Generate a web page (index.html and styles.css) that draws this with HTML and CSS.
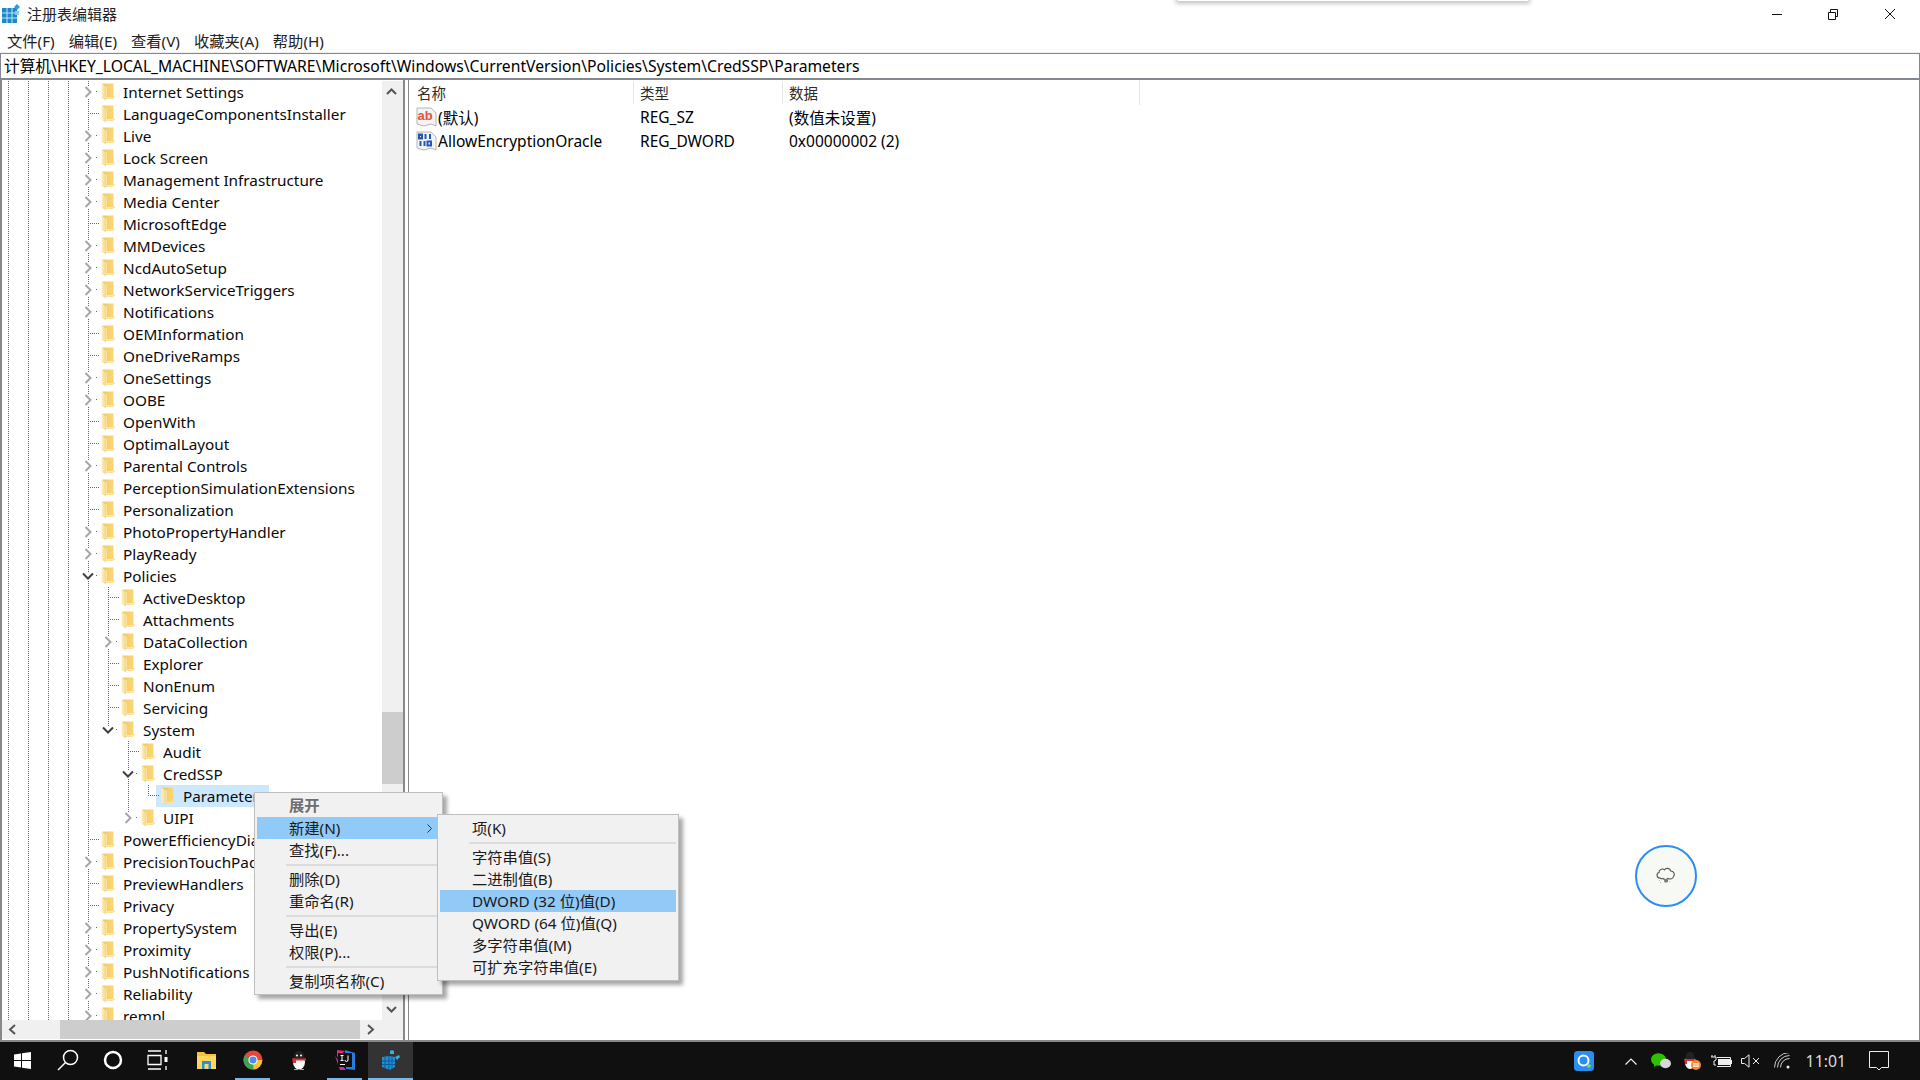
FILE: index.html
```html
<!DOCTYPE html>
<html lang="zh-CN">
<head>
<meta charset="utf-8">
<title>注册表编辑器</title>
<link rel="stylesheet" href="styles.css">
</head>
<body>
<svg class="defs" width="0" height="0">
  <defs>
    <linearGradient id="fg" x1="0" y1="0" x2="1" y2="0"><stop offset="0" stop-color="#fff0c0"/><stop offset="1" stop-color="#f6d77f"/></linearGradient>
    <linearGradient id="bk" x1="0" y1="0" x2="1" y2="0"><stop offset="0" stop-color="#f3c95f"/><stop offset="1" stop-color="#fbd778"/></linearGradient>
    <symbol id="folder" viewBox="0 0 14 18">
      <path d="M1.5 0.500H12.500V14.500H3z" fill="url(#bk)"/>
      <path d="M12.500 13H13.500V15H12.500z" fill="#f3d88f"/>
      <path d="M0.500 1L5 3.500V17.500L0.500 15z" fill="url(#fg)"/>
      <path d="M5 3.500H6V15H12.500V16H5z" fill="#f8e2a3"/>
    </symbol>
    <symbol id="ch-r" viewBox="0 0 8 12"><path d="M1.500 1L6.500 6L1.500 11" fill="none" stroke="#a6a6a6" stroke-width="2"/></symbol>
    <symbol id="ch-d" viewBox="0 0 12 8"><path d="M1 1.500L6 6.500L11 1.500" fill="none" stroke="#404040" stroke-width="2"/></symbol>
  </defs>
</svg>

<div class="window">
  <header class="titlebar">
    <svg class="app-icon" width="19" height="19" viewBox="0 0 19 19"><rect x="0" y="4" width="15" height="15" fill="#1c88c9"/><path d="M5 4v15M10 4v15M0 9h15M0 14h15" stroke="#bfe3f6" stroke-width="1"/><path d="M15 0l3 3-3 3-3-3z" fill="#2a9fd8"/><rect x="13" y="7" width="4" height="4" fill="#8fcbe9"/></svg>
    <span class="title">注册表编辑器</span>
    <div class="controls">
      <svg class="ctl" width="56" height="26" viewBox="0 0 56 26"><path d="M23 13.500h10" stroke="#111" fill="none"/></svg>
      <svg class="ctl" width="60" height="26" viewBox="0 0 60 26"><path d="M23.500 11.500h7v7h-7zM25.500 11V8.500h7v7H31" stroke="#111" fill="none"/></svg>
      <svg class="ctl" width="50" height="26" viewBox="0 0 50 26"><path d="M20 8l10 10M30 8l-10 10" stroke="#111" fill="none"/></svg>
    </div>
  </header>
  <nav class="menubar">
    <span>文件(F)</span><span>编辑(E)</span><span>查看(V)</span><span>收藏夹(A)</span><span>帮助(H)</span>
  </nav>
  <div class="address">计算机\HKEY_LOCAL_MACHINE\SOFTWARE\Microsoft\Windows\CurrentVersion\Policies\System\CredSSP\Parameters</div>

  <main class="panes">
    <section class="tree-pane">
      <div class="tree-top">
        <div class="tree">
          <div class="row l1"><svg class="ex"><use href="#ch-r"/></svg><svg class="fo"><use href="#folder"/></svg><span>Internet Settings</span></div>
          <div class="row l1 leaf"><svg class="fo"><use href="#folder"/></svg><span>LanguageComponentsInstaller</span></div>
          <div class="row l1"><svg class="ex"><use href="#ch-r"/></svg><svg class="fo"><use href="#folder"/></svg><span>Live</span></div>
          <div class="row l1"><svg class="ex"><use href="#ch-r"/></svg><svg class="fo"><use href="#folder"/></svg><span>Lock Screen</span></div>
          <div class="row l1"><svg class="ex"><use href="#ch-r"/></svg><svg class="fo"><use href="#folder"/></svg><span>Management Infrastructure</span></div>
          <div class="row l1"><svg class="ex"><use href="#ch-r"/></svg><svg class="fo"><use href="#folder"/></svg><span>Media Center</span></div>
          <div class="row l1 leaf"><svg class="fo"><use href="#folder"/></svg><span>MicrosoftEdge</span></div>
          <div class="row l1"><svg class="ex"><use href="#ch-r"/></svg><svg class="fo"><use href="#folder"/></svg><span>MMDevices</span></div>
          <div class="row l1"><svg class="ex"><use href="#ch-r"/></svg><svg class="fo"><use href="#folder"/></svg><span>NcdAutoSetup</span></div>
          <div class="row l1"><svg class="ex"><use href="#ch-r"/></svg><svg class="fo"><use href="#folder"/></svg><span>NetworkServiceTriggers</span></div>
          <div class="row l1"><svg class="ex"><use href="#ch-r"/></svg><svg class="fo"><use href="#folder"/></svg><span>Notifications</span></div>
          <div class="row l1 leaf"><svg class="fo"><use href="#folder"/></svg><span>OEMInformation</span></div>
          <div class="row l1 leaf"><svg class="fo"><use href="#folder"/></svg><span>OneDriveRamps</span></div>
          <div class="row l1"><svg class="ex"><use href="#ch-r"/></svg><svg class="fo"><use href="#folder"/></svg><span>OneSettings</span></div>
          <div class="row l1"><svg class="ex"><use href="#ch-r"/></svg><svg class="fo"><use href="#folder"/></svg><span>OOBE</span></div>
          <div class="row l1 leaf"><svg class="fo"><use href="#folder"/></svg><span>OpenWith</span></div>
          <div class="row l1 leaf"><svg class="fo"><use href="#folder"/></svg><span>OptimalLayout</span></div>
          <div class="row l1"><svg class="ex"><use href="#ch-r"/></svg><svg class="fo"><use href="#folder"/></svg><span>Parental Controls</span></div>
          <div class="row l1 leaf"><svg class="fo"><use href="#folder"/></svg><span>PerceptionSimulationExtensions</span></div>
          <div class="row l1 leaf"><svg class="fo"><use href="#folder"/></svg><span>Personalization</span></div>
          <div class="row l1"><svg class="ex"><use href="#ch-r"/></svg><svg class="fo"><use href="#folder"/></svg><span>PhotoPropertyHandler</span></div>
          <div class="row l1"><svg class="ex"><use href="#ch-r"/></svg><svg class="fo"><use href="#folder"/></svg><span>PlayReady</span></div>
          <div class="row l1"><svg class="ex dn"><use href="#ch-d"/></svg><svg class="fo"><use href="#folder"/></svg><span>Policies</span></div>
          <div class="row l2 leaf"><svg class="fo"><use href="#folder"/></svg><span>ActiveDesktop</span></div>
          <div class="row l2 leaf"><svg class="fo"><use href="#folder"/></svg><span>Attachments</span></div>
          <div class="row l2"><svg class="ex"><use href="#ch-r"/></svg><svg class="fo"><use href="#folder"/></svg><span>DataCollection</span></div>
          <div class="row l2 leaf"><svg class="fo"><use href="#folder"/></svg><span>Explorer</span></div>
          <div class="row l2 leaf"><svg class="fo"><use href="#folder"/></svg><span>NonEnum</span></div>
          <div class="row l2 leaf"><svg class="fo"><use href="#folder"/></svg><span>Servicing</span></div>
          <div class="row l2 last"><svg class="ex dn"><use href="#ch-d"/></svg><svg class="fo"><use href="#folder"/></svg><span>System</span></div>
          <div class="row l3 leaf"><svg class="fo"><use href="#folder"/></svg><span>Audit</span></div>
          <div class="row l3"><svg class="ex dn"><use href="#ch-d"/></svg><svg class="fo"><use href="#folder"/></svg><span>CredSSP</span></div>
          <div class="row l4 leaf last"><svg class="fo"><use href="#folder"/></svg><span class="sel">Parameters</span></div>
          <div class="row l3 last"><svg class="ex"><use href="#ch-r"/></svg><svg class="fo"><use href="#folder"/></svg><span>UIPI</span></div>
          <div class="row l1 leaf"><svg class="fo"><use href="#folder"/></svg><span>PowerEfficiencyDiagnostics</span></div>
          <div class="row l1"><svg class="ex"><use href="#ch-r"/></svg><svg class="fo"><use href="#folder"/></svg><span>PrecisionTouchPad</span></div>
          <div class="row l1 leaf"><svg class="fo"><use href="#folder"/></svg><span>PreviewHandlers</span></div>
          <div class="row l1 leaf"><svg class="fo"><use href="#folder"/></svg><span>Privacy</span></div>
          <div class="row l1"><svg class="ex"><use href="#ch-r"/></svg><svg class="fo"><use href="#folder"/></svg><span>PropertySystem</span></div>
          <div class="row l1"><svg class="ex"><use href="#ch-r"/></svg><svg class="fo"><use href="#folder"/></svg><span>Proximity</span></div>
          <div class="row l1"><svg class="ex"><use href="#ch-r"/></svg><svg class="fo"><use href="#folder"/></svg><span>PushNotifications</span></div>
          <div class="row l1"><svg class="ex"><use href="#ch-r"/></svg><svg class="fo"><use href="#folder"/></svg><span>Reliability</span></div>
          <div class="row l1"><svg class="ex"><use href="#ch-r"/></svg><svg class="fo"><use href="#folder"/></svg><span>rempl</span></div>
        </div>
        <div class="vscroll">
          <svg width="21" height="21" viewBox="0 0 21 21"><path d="M5 13l4.500-4.500L14 13" fill="none" stroke="#555" stroke-width="2"/></svg>
          <div class="vtrack"><div class="vthumb"></div></div>
          <svg width="21" height="21" viewBox="0 0 21 21"><path d="M5 8l4.500 4.500L14 8" fill="none" stroke="#555" stroke-width="2"/></svg>
        </div>
      </div>
      <div class="hscroll">
        <svg width="20" height="19" viewBox="0 0 20 19"><path d="M13 5l-5 4.500 5 4.500" fill="none" stroke="#555" stroke-width="2"/></svg>
        <div class="hthumb"></div>
        <svg width="20" height="19" viewBox="0 0 20 19"><path d="M6 5l5 4.500-5 4.500" fill="none" stroke="#555" stroke-width="2"/></svg>
      </div>
    </section>

    <div class="splitter"></div>

    <section class="list-pane">
      <div class="list-head">
        <span class="c-name">名称</span><span class="c-type">类型</span><span class="c-data">数据</span>
      </div>
      <div class="list-row">
        <span class="c-name">
          <svg class="val" width="21" height="20" viewBox="0 0 21 20"><path d="M1 1h14l5 5v13l-5-2-7 2-7-2z" fill="#f4f4f4" stroke="#b5b5b5"/><text x="1.500" y="12.500" class="ab">ab</text></svg>
          (默认)
        </span>
        <span class="c-type">REG_SZ</span><span class="c-data">(数值未设置)</span>
      </div>
      <div class="list-row">
        <span class="c-name">
          <svg class="val" width="21" height="20" viewBox="0 0 21 20"><path d="M1 1h14l5 5v13l-5-2-7 2-7-2z" fill="#f4f4f4" stroke="#b5b5b5"/><g fill="none" stroke="#2455b8" stroke-width="2"><rect x="3" y="3.500" width="3" height="4"/><path d="M9.500 3v5M14 3v5"/><path d="M4.500 10v5M8.500 10v5"/><rect x="11.500" y="10.500" width="3.500" height="4"/></g></svg>
          AllowEncryptionOracle
        </span>
        <span class="c-type">REG_DWORD</span><span class="c-data">0x00000002 (2)</span>
      </div>
    </section>
  </main>

  <footer class="taskbar">
    <div class="tb"><svg width="17" height="17" viewBox="0 0 17 17"><path d="M0 2.500L7 1.500V8H0zM8 1.300L17 0V8H8zM0 9h7v6.500L0 14.500zM8 9h9v8l-9-1.300z" fill="#fff"/></svg></div>
    <div class="tb"><svg width="22" height="22" viewBox="0 0 22 22"><circle cx="13.500" cy="8.500" r="7" fill="none" stroke="#fff" stroke-width="1.500"/><path d="M8.500 13.500L1 21" stroke="#fff" stroke-width="1.500"/></svg></div>
    <div class="tb"><svg width="20" height="20" viewBox="0 0 20 20"><circle cx="10" cy="10" r="8" fill="none" stroke="#fff" stroke-width="2.500"/></svg></div>
    <div class="tb"><svg width="22" height="20" viewBox="0 0 22 20"><path d="M1 1h13M1 5.500h13v9H1zM1 19h13" fill="none" stroke="#fff" stroke-width="1.300"/><path d="M19 0v4M19 16v4" stroke="#fff" stroke-width="1.300"/><rect x="17.500" y="7" width="3" height="5" fill="#fff"/></svg></div>
    <div class="tb wide"><svg width="19" height="17" viewBox="0 0 19 17"><path d="M0 0h7l2 2h10v15H0z" fill="#f4c33d"/><path d="M0 4h19v13H0z" fill="#ffd75f"/><path d="M5 9h9v8h-2.500v-5h-4v5H5z" fill="#2e8fd8"/></svg></div>
    <div class="tb run chrome"><svg width="20" height="20" viewBox="0 0 20 20"><circle cx="10" cy="10" r="9.500" fill="#e8453c"/><path d="M10 10L1.800 14.800A9.500 9.500 0 0 0 10.500 19.500z" fill="#34a853"/><path d="M10 10h9.300A9.500 9.500 0 0 1 10.500 19.500z" fill="#fbc02d"/><path d="M1.800 14.800A9.500 9.500 0 0 1 2 5L7 10z" fill="#34a853"/><circle cx="10" cy="10" r="4.600" fill="#fff"/><circle cx="10" cy="10" r="3.500" fill="#4a8cf0"/></svg></div>
    <div class="tb"><svg width="16" height="19" viewBox="0 0 16 19"><ellipse cx="8" cy="11" rx="6" ry="7.500" fill="#fff"/><path d="M2.500 8C2.500 2 5 0 8 0s5.500 2 5.500 8z" fill="#222"/><circle cx="6" cy="4.500" r="1" fill="#fff"/><circle cx="10" cy="4.500" r="1" fill="#fff"/><path d="M1 7.500h14v2H5v2.500H2z" fill="#e62b2b"/><path d="M3 18h4v1H3zM9 18h4v1H9z" fill="#f5a623"/></svg></div>
    <div class="tb run idea"><svg width="20" height="20" viewBox="0 0 20 20"><path d="M2 0l8 1-8 6z" fill="#f0266f"/><path d="M10 0l10 3v17l-9-1z" fill="#2d7bd8"/><path d="M0 6l5 14h6z" fill="#c42fa0"/><rect x="3" y="3" width="14" height="14" fill="#111"/><rect x="5" y="14" width="5" height="1" fill="#fff"/><path d="M5.500 5.500h3M7 5.500v5M5.500 10.500h3M13 5.500v4.500a1.500 1.500 0 0 1-3 0" fill="none" stroke="#fff" stroke-width="1"/></svg></div>
    <div class="tb active"><svg width="18" height="20" viewBox="0 0 18 20"><path d="M0 7l7-1 6 1v10l-5 3-8-3z" fill="#1f8fd0"/><path d="M3 7v11M7 6v14M10 7v12M0 11h13M0 14.500h13" stroke="#0e5d97" stroke-width="1"/><path d="M8 1l2-1 2 1v3h-4z" fill="#36aee6"/><path d="M13 7l4-2 1 2-3 3z" fill="#36aee6"/></svg></div>
    <div class="tray">
      <svg class="t-q" width="20" height="20" viewBox="0 0 20 20"><rect width="20" height="20" rx="3.500" fill="#2a8df0"/><circle cx="9.500" cy="9.500" r="5" fill="none" stroke="#fff" stroke-width="2"/><circle cx="15" cy="15" r="1.800" fill="#8ce04a"/></svg>
      <svg class="t-up" width="12" height="7" viewBox="0 0 12 7"><path d="M0.500 6.500L6 1l5.500 5.500" fill="none" stroke="#eee" stroke-width="1.200"/></svg>
      <svg class="t-wx" width="20" height="16" viewBox="0 0 20 16"><ellipse cx="7.500" cy="6.500" rx="7.500" ry="6.200" fill="#2dc100"/><path d="M3 11l0 3 3-2z" fill="#2dc100"/><ellipse cx="14.500" cy="10.500" rx="5.500" ry="4.700" fill="#d8d8d8"/></svg>
      <svg class="t-qq" width="18" height="20" viewBox="0 0 18 20"><ellipse cx="7" cy="11" rx="5" ry="7" fill="#fff"/><path d="M2.500 8C2.500 2 4.500 1 7 1s4.500 1 4.500 7z" fill="#222"/><path d="M1 8h12v2H4v3H2z" fill="#e62b2b"/><circle cx="13" cy="14" r="5" fill="#f0883a"/><path d="M10 12.800h6M10 15.200h6" stroke="#fff" stroke-width="1.300"/></svg>
      <svg class="t-bat" width="21" height="14" viewBox="0 0 21 14"><path d="M6 3.500h13.500v9H6" fill="none" stroke="#eee"/><rect x="7" y="5" width="12" height="6" fill="#eee"/><rect x="20" y="6" width="1" height="4" fill="#eee"/><path d="M1 1v2M4 1v2M0 3h5v3l-2 1v4h2" fill="none" stroke="#eee"/></svg>
      <svg class="t-vol" width="19" height="14" viewBox="0 0 19 14"><path d="M0.500 4.500h3L8 0.800v12.400L3.500 9.500h-3z" fill="none" stroke="#eee"/><path d="M12 4l6 6M18 4l-6 6" stroke="#eee" fill="none"/></svg>
      <svg class="t-wifi" width="16" height="16" viewBox="0 0 16 16"><path d="M0.500 15.500A15 15 0 0 1 15.500 0.500M3.500 15.500A12 12 0 0 1 15.500 3.500M6.500 15.500A9 9 0 0 1 15.500 6.500" transform="translate(0 -1)" fill="none" stroke="#ccc"/><circle cx="14" cy="14" r="1.500" fill="#eee"/></svg>
      <span class="clock">11:01</span>
      <svg class="t-note" width="20" height="20" viewBox="0 0 20 20"><path d="M0.500 0.500h19v16h-7l-2.500 2.500L7.500 16.500h-7z" fill="none" stroke="#eee"/></svg>
    </div>
  </footer>

  <div class="ctx ctx-main">
    <div class="mi def">展开</div>
    <div class="mi hot">新建(N)<svg class="arrow" width="5" height="9" viewBox="0 0 5 9"><path d="M0.500 0.500l4 4-4 4" fill="none" stroke="#333"/></svg></div>
    <div class="mi">查找(F)...</div>
    <div class="sep"></div>
    <div class="mi">删除(D)</div>
    <div class="mi">重命名(R)</div>
    <div class="sep"></div>
    <div class="mi">导出(E)</div>
    <div class="mi">权限(P)...</div>
    <div class="sep"></div>
    <div class="mi">复制项名称(C)</div>
  </div>
  <div class="ctx ctx-sub">
    <div class="mi">项(K)</div>
    <div class="sep"></div>
    <div class="mi">字符串值(S)</div>
    <div class="mi">二进制值(B)</div>
    <div class="mi hot">DWORD (32 位)值(D)</div>
    <div class="mi">QWORD (64 位)值(Q)</div>
    <div class="mi">多字符串值(M)</div>
    <div class="mi">可扩充字符串值(E)</div>
  </div>

  <div class="top-shadow"></div>
  <div class="pointer">
    <svg width="20" height="20" viewBox="0 0 20 20"><path d="M4 12C0.500 12 0 7.500 3 6.500 3 3.500 7 2 8.500 3.800 10 1.500 14 2 14.800 5 17.500 5 19.500 8 17.500 10.500 17 12.800 14 13.500 12 12.500 10.500 13.500 8 13.500 7 12.500 6 13 5 12.800 4 12z" fill="none" stroke="#555" stroke-width="1.100"/><path d="M8 13.500h4v2l-1 1H8.500z" fill="#777"/><path d="M4 16.500h1M13 15.500h1M3 14.500h1" stroke="#bbb"/></svg>
  </div>
</div>
</body>
</html>
```

FILE: styles.css
```css
* { box-sizing: border-box; }
html, body { margin: 0; height: 100%; overflow: hidden; }
body {
  background: #fff;
  color: #000;
  font-family: "Noto Sans", "Noto Sans CJK SC", sans-serif;
  font-size: 15px;
}
.defs { position: absolute; }
.window {
  position: relative;
  width: 1920px;
  height: 1080px;
  display: flex;
  flex-direction: column;
}

/* title bar */
.titlebar {
  height: 27px;
  display: flex;
  align-items: center;
  padding-left: 2px;
  flex: none;
}
.app-icon { margin-right: 6px; }
.title { font-family: "Noto Sans CJK SC", sans-serif; font-size: 15px; color: #222; }
.controls { margin-left: auto; display: flex; align-items: flex-start; height: 26px; margin-right: 5px; }
.ctl { display: block; }

/* menu */
.menubar {
  height: 26px;
  flex: none;
  display: flex;
  align-items: center;
  gap: 14px;
  padding: 0 0 0 7px;
  font-family: "Noto Sans", "Noto Sans CJK SC", sans-serif;
  font-size: 15.3px;
  color: #222;
  background: #fff;
  border-bottom: 1px solid #f0f0f0;
}

/* address */
.address {
  height: 27px;
  flex: none;
  border: 2px solid #828790;
  border-width: 1px 1px 2px 1px;
  padding-left: 3px;
  line-height: 25px;
  font-size: 15.7px;
  white-space: nowrap;
  overflow: hidden;
}

/* panes */
.panes { flex: 1; display: flex; min-height: 0; border-bottom: 2px solid #888; border-right: 1px solid #888; }
.tree-pane {
  width: 403px;
  flex: none;
  border-left: 2px solid #888;
  display: flex;
  flex-direction: column;
  min-height: 0;
}
.tree-top { flex: 1; min-height: 0; display: flex; padding-top: 1px; }
.tree {
  flex: 1;
  min-width: 0;
  overflow: hidden;
  background-image:
    linear-gradient(#666 50%, transparent 50%),
    linear-gradient(#666 50%, transparent 50%),
    linear-gradient(#666 50%, transparent 50%),
    linear-gradient(#666 50%, transparent 50%),
    linear-gradient(#666 50%, transparent 50%);
  background-size: 1px 2px;
  background-position: 6px 0, 26px 0, 46px 0, 66px 0, 86px 0;
  background-repeat: repeat-y;
}
.row {
  position: relative;
  height: 22px;
  display: flex;
  align-items: center;
  white-space: nowrap;
  font-size: 15.3px;
  line-height: 22px;
  color: #0a0a0a;
}
.row .fo { width: 14px; height: 18px; flex: none; margin-right: 8px; }
.row .ex { width: 8px; height: 12px; flex: none; margin-right: 9px; position: relative; z-index: 1; background: #fff; }
.row .ex.dn { width: 12px; height: 8px; margin-left: -2px; margin-right: 7px; }
.row::before {
  content: "";
  position: absolute;
  top: 10px;
  height: 1px;
  background: linear-gradient(90deg, #666 50%, transparent 50%);
  background-size: 2px 1px;
}
.row:not(.leaf)::before { width: 1px; }
.l1 { padding-left: 99px; }
.l1:not(.leaf) { padding-left: 82px; }
.l1::before { left: 86px; width: 11px; }
.l1:not(.leaf)::before { left: 94px; }

.l2, .l3, .l4 {
  background-image: linear-gradient(#666 50%, transparent 50%);
  background-size: 1px 2px;
  background-repeat: repeat-y;
}
.l2 { padding-left: 119px; background-position: 106px 0; }
.l2:not(.leaf) { padding-left: 102px; }
.l2::before { left: 106px; width: 11px; }
.l2:not(.leaf)::before { left: 114px; }

.l3 { padding-left: 139px; background-position: 126px 0; }
.l3:not(.leaf) { padding-left: 122px; }
.l3::before { left: 126px; width: 11px; }
.l3:not(.leaf)::before { left: 134px; }

.l4 { padding-left: 159px; background-position: 126px 0; }
.l4::before { left: 146px; width: 11px; }

/* guide stub: the last child's vertical line stops at the row's middle */
.row.last::after {
  content: "";
  position: absolute;
  top: 0;
  width: 1px;
  height: 10px;
  background: linear-gradient(#666 50%, transparent 50%);
  background-size: 1px 2px;
}
.l2.last { background-image: none; }
.l2.last::after { left: 106px; }
.l3.last { background-image: none; }
.l3.last::after { left: 126px; }
.l4.last::after { left: 146px; }

.sel {
  background: #cce8ff;
  height: 22px;
  display: block;
}
.l4 .fo { margin-right: -14px; position: relative; z-index: 1; }
.l4 .sel { margin-left: -5px; padding-left: 27px; width: 113px; }

.vscroll {
  width: 21px;
  flex: none;
  background: #f0f0f0;
  display: flex;
  flex-direction: column;
}
.vscroll svg { display: block; flex: none; }
.vtrack { flex: 1; display: flex; flex-direction: column; justify-content: flex-end; padding-bottom: 215px; }
.vthumb { height: 72px; background: #cdcdcd; }

.hscroll {
  height: 19px;
  flex: none;
  background: #f0f0f0;
  display: flex;
  margin-bottom: 1px;
}
.hscroll svg { flex: none; display: block; }
.hthumb { width: 300px; margin-left: 38px; margin-right: 2px; background: #cdcdcd; }

.splitter {
  width: 6px;
  flex: none;
  border-left: 2px solid #888;
  border-right: 1px solid #888;
  background: #fff;
}

/* list */
.list-pane { flex: 1; min-width: 0; font-size: 15px; }
.list-head {
  height: 25px;
  display: flex;
  align-items: center;
  font-family: "Noto Sans CJK SC", sans-serif;
  font-size: 14.5px;
  color: #2b2b2b;
  width: 731px;
  border-right: 1px solid #e5e5e5;
}
.list-head span { height: 22px; line-height: 22px; }
.list-head .c-name { width: 225px; padding-left: 8px; border-right: 1px solid #e5e5e5; }
.list-head .c-type { width: 149px; padding-left: 6px; border-right: 1px solid #e5e5e5; }
.list-head .c-data { padding-left: 6px; }
.list-row { height: 24px; display: flex; align-items: center; white-space: nowrap; font-size: 15.5px; }
.list-row .c-name { width: 225px; padding-left: 7px; display: flex; align-items: center; gap: 1px; }
.list-row .c-type { width: 149px; padding-left: 6px; }
.list-row .c-data { padding-left: 6px; }
.val { flex: none; }
.ab { font-family: "Liberation Sans", sans-serif; font-size: 13px; font-weight: 700; fill: #e2553a; }

/* task bar */
.taskbar {
  height: 38px;
  flex: none;
  background: #101010;
  display: flex;
  align-items: stretch;
}
.tb { width: 45px; flex: none; display: flex; align-items: center; justify-content: center; border-bottom: 2px solid transparent; }
.tb.wide { width: 47px; margin-left: 3px; }
.tb.run { border-bottom-color: #76b9ed; width: 35px; }
.tb.chrome { margin: 0 6px 0 5px; }
.tb.idea { margin: 0 5px 0 6px; }
.tb.active { background: #333; border-bottom-color: #76b9ed; margin-left: 1px; }
.tray { margin-left: auto; display: flex; align-items: center; position: relative; padding-right: 31px; color: #ddd; }
.tray svg { display: block; flex: none; }
.t-q { margin-right: 31px; }
.t-up { margin-right: 14px; }
.t-wx { margin-right: 12px; }
.t-qq { margin-right: 10px; }
.t-bat { margin-right: 9px; }
.t-vol { margin-right: 14px; }
.t-wifi { margin-right: 16px; }
.clock { font-family: "Noto Sans", sans-serif; font-size: 15.8px; margin-right: 23px; color: #ddd; }

/* context menus */
.ctx {
  position: absolute;
  background: #f1f1f1;
  border: 1px solid #bfbfbf;
  box-shadow: 4px 4px 4px rgba(0, 0, 0, .35);
  padding: 2px;
  font-family: "Noto Sans", "Noto Sans CJK SC", sans-serif;
  font-size: 15.3px;
}
.ctx-main { left: 254px; top: 792px; width: 189px; height: 203px; }
.ctx-sub { left: 437px; top: 814px; width: 242px; height: 167px; }
.mi {
  position: relative;
  height: 22px;
  line-height: 22px;
  padding-left: 32px;
  color: #1a1a1a;
  white-space: nowrap;
}
.mi.def { font-weight: 700; color: #6d6d6d; line-height: 20px; }
.mi.hot { background: #91c9f7; }
.sep { height: 2px; background: #dcdcdc; margin: 3px 0 2px 29px; }
.arrow { position: absolute; right: 8px; top: 7px; }

.top-shadow {
  position: absolute;
  left: 1178px;
  top: 0;
  width: 350px;
  height: 1px;
  box-shadow: 0 0 5px 2px rgba(0, 0, 0, .3);
}
.pointer {
  position: absolute;
  left: 1635px;
  top: 845px;
  width: 62px;
  height: 62px;
  border-radius: 50%;
  border: 2.5px solid #2b8df5;
  background: #f7f9f5;
  display: flex;
  align-items: center;
  justify-content: center;
}
```
